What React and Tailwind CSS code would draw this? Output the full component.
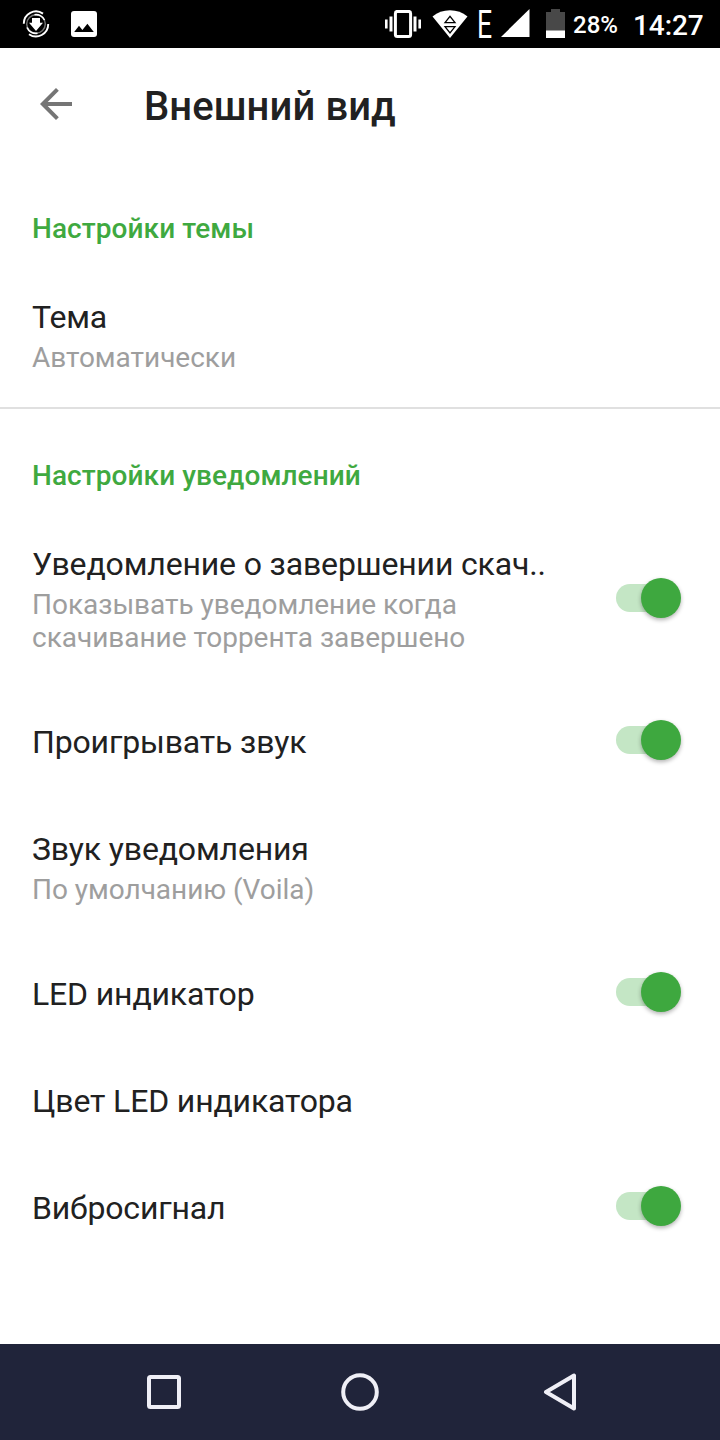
import React from "react";

function StatusBar() {
  return (
    <header className="flex h-12 items-start bg-black text-white">
      <svg className="ml-[22px] mt-[10px] h-7 w-7 shrink-0" viewBox="0 0 28 28" fill="none">
        <circle cx="14" cy="14" r="9.3" stroke="#777" strokeWidth="1.4" />
        <path d="M1.8 13.8A12.2 12.2 0 0 1 21 3.6M26.2 14A12.2 12.2 0 0 1 7 24.2" stroke="#fff" strokeWidth="1.9" />
        <path d="M12.5 4.8A9.3 9.3 0 0 1 22.5 10M5 17.5A9.3 9.3 0 0 0 15.5 23.2" stroke="#fff" strokeWidth="1.6" />
        <path d="M10 8h8v4.8h3L14 21l-7-8.2h3z" fill="#fff" />
      </svg>
      <svg className="ml-[21px] mt-[11px] h-[26px] w-[26px] shrink-0" viewBox="0 0 26 26">
        <rect width="26" height="26" rx="3" fill="#fff" />
        <path d="M3.2 21L8 14.8l3.4 4.2L16.4 12.7 22.8 21z" fill="#000" />
      </svg>
      <svg className="ml-[288px] mt-[10px] h-7 w-9 shrink-0" viewBox="0 0 36 28">
        <rect x="10.4" y="1.4" width="15.2" height="25" rx="2" fill="none" stroke="#fff" strokeWidth="3" />
        <path d="M0 9.5h2.6v9H0zM4.5 6.5h3v15h-3zM28.5 6.5h3v15h-3zM33.4 9.5H36v9h-2.6z" fill="#fff" />
      </svg>
      <svg className="ml-[11px] mt-[10px] h-7 w-[36px] shrink-0" viewBox="0 0 36 28">
        <path d="M.5 6.5Q8 .3 18 .3T35.5 6.5L18 28z" fill="#fff" />
        <path d="M13 12.7L18 6.4l5 6.3zM13 16.6h10L18 23z" fill="none" stroke="#000" strokeWidth="1.3" />
      </svg>
      <span className="ml-[9px] mt-[4px] block w-[16px] shrink-0 origin-left scale-x-[0.7] text-[38px] leading-[42px]">E</span>
      <svg className="ml-[8px] mt-[9px] h-[28px] w-[29px] shrink-0" viewBox="0 0 29 28">
        <path d="M0 28L28.5 0v28z" fill="#fff" />
      </svg>
      <svg className="ml-[16px] mt-[9px] h-[29px] w-[19px] shrink-0" viewBox="0 0 19 29">
        <path d="M0 3h5V0h9v3h5v19H0z" fill="#484848" />
        <path d="M0 21.5h19V29H0z" fill="#fff" />
      </svg>
      <span className="ml-[8px] mt-[10px] w-[60px] shrink-0 whitespace-nowrap text-[24px] leading-[30px] font-medium">28%</span>
      <span className="mt-[9px] whitespace-nowrap text-[28px] leading-[34px] font-medium tracking-[-0.1px]">14:27</span>
    </header>
  );
}

function Switch({ className = "" }) {
  return (
    <span role="switch" aria-checked="true" className={`mr-[39px] flex h-10 w-[65px] shrink-0 items-center ${className}`}>
      <span className="-mr-10 h-7 w-[52px] shrink-0 rounded-full bg-[#c4e6c5]" />
      <span className="ml-[13px] h-10 w-10 shrink-0 rounded-full bg-[#3ea83f] shadow-[0_2px_4px_rgba(0,0,0,0.3)]" />
    </span>
  );
}

function Row({ title, children, on }) {
  return (
    <div className="flex items-center justify-between">
      <div className="pt-[37px] pb-8 pl-8">
        <div className="whitespace-nowrap text-[32px] leading-[38px] tracking-[-0.15px] text-[#212121]">{title}</div>
        {children && <div className="mt-[5px] text-[28px] leading-[33px] tracking-[-0.03px] text-[#9e9e9e]">{children}</div>}
      </div>
      {on && <Switch className={children ? "mt-0.5" : ""} />}
    </div>
  );
}

function Section({ children }) {
  return <h2 className="pb-4 pl-8 text-[28px] leading-[33px] font-medium tracking-[0.07px] text-[#3fa940]">{children}</h2>;
}

export default function App() {
  return (
    <div className="flex h-[1440px] w-[720px] flex-col overflow-hidden bg-white font-['Roboto',sans-serif]">
      <StatusBar />
      <div className="flex h-28 items-center pl-10">
        <svg className="h-8 w-8" viewBox="0 0 32 32" fill="none" stroke="#757575" strokeWidth="4">
          <path d="M32 16H3M17.4 1.4L2.8 16l14.6 14.6" />
        </svg>
        <h1 className="ml-[72px] pt-1.5 text-[40px] leading-[48px] font-medium tracking-[0.08px] text-[#212121]">Внешний вид</h1>
      </div>
      <main className="flex-1 pt-[52px]">
        <Section>Настройки темы</Section>
        <Row title="Тема">Автоматически</Row>
        <div className="mt-px mb-[50px] h-[2px] bg-[#e0e0e0]" />
        <Section>Настройки уведомлений</Section>
        <Row title="Уведомление о завершении скач.." on>
          Показывать уведомление когда<br />скачивание торрента завершено
        </Row>
        <Row title="Проигрывать звук" on />
        <Row title="Звук уведомления">По умолчанию (Voila)</Row>
        <Row title="LED индикатор" on />
        <Row title="Цвет LED индикатора" />
        <Row title="Вибросигнал" on />
      </main>
      <nav className="flex h-24 items-center bg-[#20243a] pl-[147px]">
        <svg className="h-[34px] w-[34px]" viewBox="0 0 34 34" fill="none" stroke="#efeff6" strokeWidth="4">
          <rect x="2" y="2" width="30" height="30" rx="1.5" />
        </svg>
        <svg className="ml-[160px] h-[38px] w-[38px]" viewBox="0 0 38 38" fill="none" stroke="#efeff6" strokeWidth="4">
          <circle cx="19" cy="19" r="16.8" />
        </svg>
        <svg className="ml-[164px] h-[38px] w-[34px]" viewBox="0 0 34 38" fill="none" stroke="#efeff6" strokeWidth="4" strokeLinejoin="round">
          <path d="M31 2.5v33L3 19z" />
        </svg>
      </nav>
    </div>
  );
}
